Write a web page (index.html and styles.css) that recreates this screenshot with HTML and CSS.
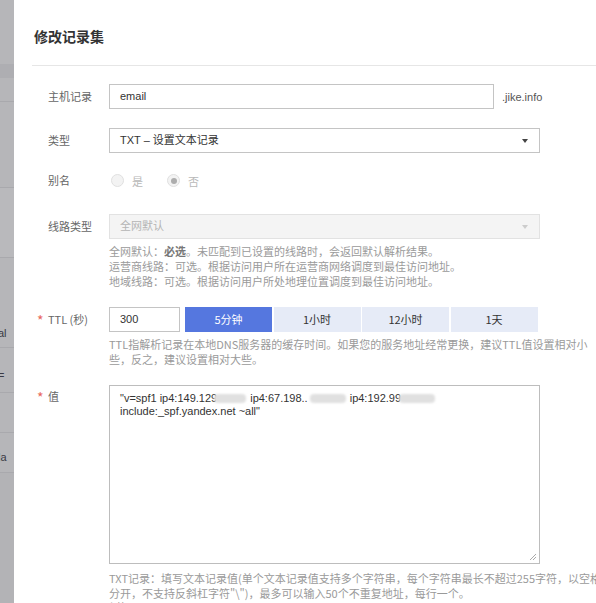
FILE: index.html
```html
<!DOCTYPE html>
<html lang="zh">
<head>
<meta charset="utf-8">
<title>修改记录集</title>
<link rel="stylesheet" href="styles.css">
</head>
<body>
<div class="page">
  <div class="backdrop">
    <div class="bd-seg bd-a"></div>
    <div class="bd-seg bd-b"></div>
    <div class="bd-seg bd-c"></div>
    <div class="bd-seg bd-d"></div>
    <div class="bd-seg bd-e"></div>
    <div class="bd-seg bd-f"><span class="bd-text">al</span></div>
    <div class="bd-seg bd-g"><span class="bd-text">=</span></div>
    <div class="bd-seg bd-h"></div>
    <div class="bd-seg bd-i"><span class="bd-text">la</span></div>
    <div class="bd-seg bd-j"></div>
  </div>
  <div class="dialog">
    <h2 class="title">修改记录集</h2>
    <div class="divider"></div>
    <div class="form">
      <div class="row row-host">
        <div class="label">主机记录</div>
        <div class="field field-inline">
          <div class="input input-host">email</div>
          <span class="suffix">.jike.info</span>
        </div>
      </div>

      <div class="row row-type">
        <div class="label">类型</div>
        <div class="field">
          <div class="input select">
            <span>TXT – 设置文本记录</span>
            <span class="caret"></span>
          </div>
        </div>
      </div>

      <div class="row row-alias">
        <div class="label">别名</div>
        <div class="field field-inline radios">
          <span class="radio"></span><span class="radio-text">是</span>
          <span class="radio radio-on"></span><span class="radio-text">否</span>
        </div>
      </div>

      <div class="row row-line">
        <div class="label">线路类型</div>
        <div class="field">
          <div class="input select select-disabled">
            <span>全网默认</span>
            <span class="caret caret-light"></span>
          </div>
          <div class="help">
            <div>全网默认：<b class="strong">必选</b>。未匹配到已设置的线路时，会返回默认解析结果。</div>
            <div>运营商线路：可选。根据访问用户所在运营商网络调度到最佳访问地址。</div>
            <div>地域线路：可选。根据访问用户所处地理位置调度到最佳访问地址。</div>
          </div>
        </div>
      </div>

      <div class="row row-ttl">
        <div class="label"><span class="star">*</span>TTL (秒)</div>
        <div class="field">
          <div class="ttl-line">
            <div class="input input-ttl">300</div>
            <div class="ttl-buttons">
              <span class="tbtn tbtn-on">5分钟</span>
              <span class="tbtn">1小时</span>
              <span class="tbtn">12小时</span>
              <span class="tbtn">1天</span>
            </div>
          </div>
          <div class="help">
            <div>TTL指解析记录在本地DNS服务器的缓存时间。如果您的服务地址经常更换，建议TTL值设置相对小</div>
            <div>些，反之，建议设置相对大些。</div>
          </div>
        </div>
      </div>

      <div class="row row-value">
        <div class="label label-value"><span class="star">*</span>值</div>
        <div class="field">
          <div class="textarea">
            <div>"v=spf1 ip4:149.129<span class="blur blur-1"></span>ip4:67.198..<span class="blur blur-2"></span>ip4:192.99<span class="blur blur-3"></span></div>
            <div>include:_spf.yandex.net ~all"</div>
            <svg class="grip" width="8" height="8" viewBox="0 0 8 8"><path d="M7 1 L1 7 M7 4 L4 7" stroke="#aaa" stroke-width="1" fill="none"/></svg>
          </div>
          <div class="help help-value">
            <div>TXT记录：填写文本记录值(单个文本记录值支持多个字符串，每个字符串最长不超过255字符，以空格</div>
            <div>分开，不支持反斜杠字符"\")，最多可以输入50个不重复地址，每行一个。</div>
            <div>例如：</div>
          </div>
        </div>
      </div>
    </div>
  </div>
</div>
</body>
</html>
```
FILE: styles.css
```css
html, body {
  margin: 0;
  padding: 0;
  background: #fff;
}

body {
  font-family: "Liberation Sans", "Noto Sans CJK SC", sans-serif;
  font-size: 11px;
  color: #333;
}

.page {
  display: flex;
  width: 596px;
  height: 603px;
  overflow: hidden;
  background: #fff;
}

/* grey backdrop strip behind the dialog */
.backdrop {
  width: 14px;
  flex: none;
  background: #b6b6b9;
  display: flex;
  flex-direction: column;
  overflow: hidden;
}

.bd-seg {
  border-bottom: 1px solid #a9a9ad;
  overflow: hidden;
  white-space: nowrap;
  box-sizing: border-box;
}

.bd-a { height: 64px; border-bottom: none; }
.bd-b { height: 14px; background: #aeaeb2; border-bottom: none; }
.bd-c { height: 24px; }
.bd-d { height: 86px; }
.bd-e { height: 70px; background: #b9b9bc; }
.bd-f { height: 90px; padding-top: 69px; }
.bd-g { height: 45px; padding-top: 21px; }
.bd-h { height: 40px; }
.bd-i { height: 40px; padding-top: 18px; }
.bd-j { flex: 1; border-bottom: none; background: #b3b3b6; }

.bd-text {
  display: block;
  font-size: 11px;
  line-height: 12px;
  color: #3a3a44;
  margin-left: -2px;
}

.dialog {
  flex: 1;
  padding-left: 18px;
  min-width: 0;
}

.title {
  margin: 0;
  padding: 27px 0 0 2px;
  font-family: "Noto Sans CJK SC", sans-serif;
  font-size: 14px;
  font-weight: bold;
  line-height: 18px;
  color: #333;
}

.divider {
  margin-top: 20px;
  height: 1px;
  background: #e6e6e6;
}

.form {
  padding-top: 18px;
}

.row {
  display: flex;
  align-items: flex-start;
}

.label {
  width: 77px;
  flex: none;
  box-sizing: border-box;
  padding-left: 16px;
  position: relative;
  line-height: 25px;
  color: #666;
  font-family: "Noto Sans CJK SC", sans-serif;
  font-size: 11px;
  white-space: nowrap;
}

.label-value {
  line-height: 23px;
}

.star {
  position: absolute;
  left: 5px;
  top: 1px;
  color: #e8675c;
  font-size: 14px;
}

.field {
  flex: none;
  width: 431px;
}

.field-inline {
  display: flex;
  align-items: center;
}

.row-host { margin-bottom: 19px; }
.row-type { margin-bottom: 15px; }
.row-alias { margin-bottom: 21px; }
.row-line { margin-bottom: 18px; }
.row-ttl { margin-bottom: 18px; }

.input {
  box-sizing: border-box;
  height: 25px;
  border: 1px solid #c4c4c4;
  padding: 0 10px;
  line-height: 23px;
  font-size: 11px;
  color: #333;
  background: #fff;
  font-family: "Liberation Sans", "Noto Sans CJK SC", sans-serif;
}

.input-host {
  width: 385px;
  flex: none;
}

.suffix {
  margin-left: 8px;
  color: #555;
  font-size: 11px;
  white-space: nowrap;
}

.select {
  width: 431px;
  display: flex;
  justify-content: space-between;
  align-items: center;
}

.caret {
  width: 0;
  height: 0;
  border-left: 3px solid transparent;
  border-right: 3px solid transparent;
  border-top: 4px solid #444;
  margin-right: 1px;
}

.caret-light {
  border-top-color: #ccc;
}

.select-disabled {
  background: #f4f4f4;
  border-color: #e2e2e2;
  color: #b5b5b5;
}

.radios {
  height: 25px;
  padding-left: 2px;
}

.radio {
  box-sizing: border-box;
  width: 13px;
  height: 13px;
  border-radius: 50%;
  border: 1px solid #e0e0e0;
  background: #f3f3f3;
  display: inline-flex;
  align-items: center;
  justify-content: center;
}

.radio-on::after {
  content: "";
  width: 6px;
  height: 6px;
  border-radius: 50%;
  background: #adadad;
}

.radio-text {
  margin-left: 8px;
  margin-right: 24px;
  color: #b8b8b8;
  font-family: "Noto Sans CJK SC", sans-serif;
  font-size: 11px;
}

.help {
  margin-top: 5px;
  line-height: 15px;
  color: #9a9a9a;
  font-family: "Noto Sans CJK SC", sans-serif;
  font-size: 11px;
  white-space: nowrap;
}

.help-value {
  margin-top: 7px;
  line-height: 14.5px;
}

.strong {
  font-weight: bold;
  color: #777;
}

.ttl-line {
  display: flex;
  align-items: stretch;
}

.input-ttl {
  width: 71px;
  flex: none;
}

.ttl-buttons {
  display: flex;
  margin-left: 5px;
  gap: 1.5px;
}

.tbtn {
  width: 87px;
  height: 25px;
  line-height: 25px;
  text-align: center;
  background: #e6ebf7;
  color: #333;
  font-family: "Noto Sans CJK SC", sans-serif;
  font-size: 11px;
}

.tbtn-on {
  background: #5577df;
  color: #fff;
}

.textarea {
  position: relative;
  box-sizing: border-box;
  width: 431px;
  height: 179px;
  border: 1px solid #bdbdbd;
  padding: 6px 10px;
  line-height: 13px;
  font-size: 11px;
  color: #333;
  white-space: nowrap;
}

.blur {
  display: inline-block;
  height: 9px;
  vertical-align: -1px;
  background: #e0e0e0;
  border-radius: 4px;
  filter: blur(1px);
}

.blur-1 { width: 32px; margin: 0 4px 0 -3px; }
.blur-2 { width: 36px; margin: 0 4px 0 2px; }
.blur-3 { width: 36px; margin-left: -2px; }

.grip {
  position: absolute;
  right: 2px;
  bottom: 2px;
}
```
